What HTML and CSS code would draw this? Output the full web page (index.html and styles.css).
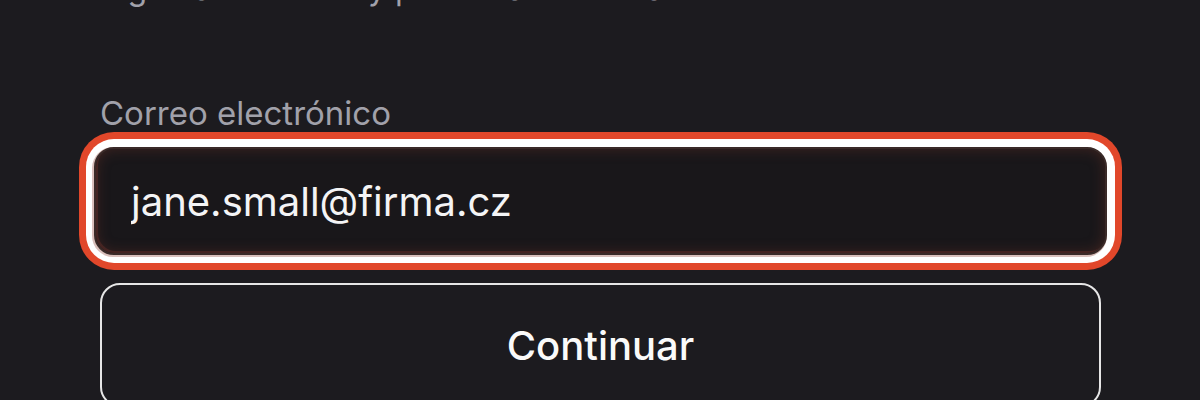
FILE: index.html
```html
<!DOCTYPE html>
<html lang="es">
<head>
<meta charset="utf-8">
<link rel="stylesheet" href="styles.css">
</head>
<body>
<main class="form">
  <p class="intro">Ingresa tu correo y presiona continuar</p>
  <label class="field">
    <span class="label">Correo electrónico</span>
    <span class="input-wrap"><input class="input" type="email" value="jane.small@firma.cz"></span>
  </label>
  <button class="btn" type="button">Continuar</button>
</main>
</body>
</html>
```
FILE: styles.css
```css
html, body {
  margin: 0;
  padding: 0;
  background: #1c1b1f;
  overflow: hidden;
  height: 400px;
}
.form {
  display: flex;
  flex-direction: column;
  width: 1001px;
  margin-left: 100px;
  font-family: Inter, "Liberation Sans", sans-serif;
}
.intro {
  margin: -31px 0 0 0;
  font-size: 32px;
  line-height: 40px;
  color: #a1a1aa;
}
.field {
  display: flex;
  flex-direction: column;
  margin-top: 84px;
}
.label {
  font-size: 33px;
  line-height: 40px;
  color: #a1a1aa;
  margin-bottom: 14px;
}
.input-wrap {
  display: block;
  margin: 0 -6px;
}
.input {
  display: block;
  box-sizing: border-box;
  width: 100%;
  height: 108px;
  padding: 0 0 0 35px;
  border: 2px solid #3a2a28;
  border-radius: 20px;
  background: #19171a;
  color: #f4f4f5;
  font-family: Inter, "Liberation Sans", sans-serif;
  font-size: 40px;
  outline: none;
  box-shadow:
    inset 0 0 14px rgba(110, 50, 40, 0.45),
    inset 2px -2px 0 rgba(80, 40, 38, 0.6),
    -1px 1px 0 1px #d9bfbb,
    0 0 0 8px #ffffff,
    0 0 0 15px #e1472a;
}
.btn {
  margin-top: 28px;
  height: 124px;
  flex-shrink: 0;
  border: 2px solid #e6e6e6;
  border-radius: 20px;
  background: transparent;
  color: #fafafa;
  font-family: Inter, "Liberation Sans", sans-serif;
  font-size: 40px;
  font-weight: 500;
  padding: 0;
}
```
